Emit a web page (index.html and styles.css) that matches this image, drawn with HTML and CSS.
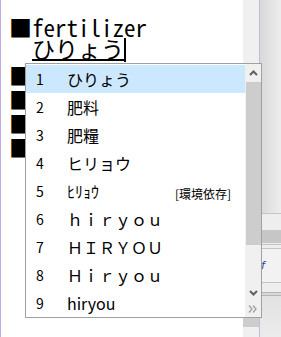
FILE: index.html
```html
<!DOCTYPE html>
<html lang="ja">
<head>
  <meta charset="UTF-8" />
  <title>IME 変換候補</title>
  <link rel="stylesheet" href="styles.css">
</head>
<body>

  <div class="screen">
    <!-- Editor -->
    <div class="editor">
      <div class="line"><span class="bullet">■</span>fertilizer</div>
      <div class="line"><span class="bullet">　</span><span class="compose">ひりょう</span><span class="caret"></span></div>
      <div class="line"><span class="bullet">■</span></div>
      <div class="line"><span class="bullet">■</span></div>
      <div class="line"><span class="bullet">■</span></div>
      <div class="line"><span class="bullet">■</span></div>
    </div>

    <div class="editor-scroll">
      <div class="editor-thumb"></div>
    </div>

    <!-- Window behind -->
    <div class="back-window">
      <div class="band band-top"></div>
      <div class="band band-line"></div>
      <div class="band band-light" style="height: 16px"></div>
      <div class="band band-dark"></div>
      <div class="band band-light" style="height: 1px"></div>
      <div class="band band-line"></div>
      <div class="band band-light" style="height: 3px"></div>
      <div class="band band-line"></div>
      <div class="band band-field"><span class="field-text">f</span></div>
      <div class="band band-line"></div>
      <div class="band band-light" style="height: 9px"></div>
      <div class="band band-shadow"></div>
      <div class="band band-bottom"></div>
    </div>

    <!-- Candidate window -->
    <div class="candidates">
      <div class="cand-list">
        <div class="cand selected"><span class="num">1</span><span class="word">ひりょう</span></div>
        <div class="cand"><span class="num">2</span><span class="word">肥料</span></div>
        <div class="cand"><span class="num">3</span><span class="word">肥糧</span></div>
        <div class="cand"><span class="num">4</span><span class="word">ヒリョウ</span></div>
        <div class="cand"><span class="num">5</span><span class="word">ﾋﾘｮｳ</span><span class="note">[環境依存]</span></div>
        <div class="cand"><span class="num">6</span><span class="word">ｈｉｒｙｏｕ</span></div>
        <div class="cand"><span class="num">7</span><span class="word">ＨＩＲＹＯＵ</span></div>
        <div class="cand"><span class="num">8</span><span class="word">Ｈｉｒｙｏｕ</span></div>
        <div class="cand"><span class="num">9</span><span class="word">hiryou</span></div>
      </div>
      <div class="cand-scroll">
        <div class="scroll-btn btn-up">
          <svg width="9" height="6" viewBox="0 0 9 6"><polyline points="1,5 4.5,1.5 8,5" fill="none" stroke="#606060" stroke-width="2"/></svg>
        </div>
        <div class="scroll-thumb"></div>
        <div class="scroll-track"></div>
        <div class="scroll-btn btn-down">
          <svg width="9" height="6" viewBox="0 0 9 6"><polyline points="1,1 4.5,4.5 8,1" fill="none" stroke="#606060" stroke-width="2"/></svg>
        </div>
        <div class="scroll-btn btn-more">
          <svg width="10" height="8" viewBox="0 0 10 8"><polyline points="1,0.5 4,4 1,7.5" fill="none" stroke="#a0a0a0" stroke-width="1.3"/><polyline points="5,0.5 8,4 5,7.5" fill="none" stroke="#a0a0a0" stroke-width="1.3"/></svg>
        </div>
      </div>
    </div>
  </div>

</body>
</html>
```

FILE: styles.css
```css
:root {
  --ink: #000000;
  --select: #cce8ff;
  --frame: #a0a0a0;
  --bar: #f0f0f0;
  --thumb: #cdcdcd;
  --lilac: #c2a8e4;
}

* {
  margin: 0;
  padding: 0;
  box-sizing: border-box;
}

html,
body {
  width: 100%;
  height: 100%;
  overflow: hidden;
  background: #ffffff;
}

.screen {
  position: relative;
  display: flex;
  width: 281px;
  height: 337px;
}

/* Editor */
.editor {
  width: 243px;
  border-left: 1px solid var(--lilac);
  padding: 15px 0 0 8px;
  font-family: "Noto Sans Mono CJK JP", "Noto Sans CJK JP", monospace;
  font-size: 23px;
  line-height: 24px;
  color: var(--ink);
  overflow: hidden;
}

.line {
  height: 24px;
  white-space: nowrap;
}

.compose {
  display: inline-block;
  height: 22px;
  line-height: 19px;
  vertical-align: top;
  border-bottom: 2px solid var(--ink);
}

.caret {
  display: inline-block;
  width: 2px;
  height: 24px;
  margin-top: -1px;
  background: var(--ink);
  vertical-align: top;
}

.editor-scroll {
  width: 17px;
  background: var(--bar);
  border-right: 1px solid #c8b8e2;
  display: flex;
  flex-direction: column;
  justify-content: flex-end;
  padding-bottom: 10px;
}

.editor-thumb {
  height: 80px;
  background: var(--thumb);
}

/* Window behind */
.back-window {
  flex: 1;
  display: flex;
  flex-direction: column;
}

.band-top {
  height: 213px;
  background: linear-gradient(to right, #d9d9d9, #ededed);
}

.band-line {
  height: 1px;
  background: #c4c4c4;
}

.band-light {
  background: #eeeeee;
}

.band-dark {
  height: 13px;
  background: #c6c6c6;
}

.band-field {
  height: 33px;
  background: #f2f2f2;
  padding: 11px 0 0 1px;
  font-family: "DejaVu Sans", sans-serif;
  font-size: 11px;
  font-style: italic;
  line-height: 11px;
  color: #1d4f86;
}

.band-shadow {
  height: 4px;
  border-top: 1px solid #b4b4b4;
  border-bottom: 1px solid #b4b4b4;
  background: #d8d8d8;
}

.band-bottom {
  flex: 1;
  background: linear-gradient(to bottom, #e2e2e2, #ececec);
}

/* Candidate window */
.candidates {
  position: absolute;
  left: 25px;
  top: 63px;
  width: 237px;
  height: 255px;
  display: flex;
  background: #ffffff;
  border: 1px solid var(--frame);
}

.cand-list {
  flex: 1;
  padding-top: 1px;
}

.cand {
  display: flex;
  align-items: center;
  height: 28px;
  font-family: "Noto Sans CJK JP", sans-serif;
  font-size: 16px;
  color: var(--ink);
  white-space: nowrap;
}

.cand.selected {
  background: var(--select);
}

.num {
  width: 41px;
  padding-left: 10px;
  font-size: 14px;
}

.note {
  margin-left: auto;
  padding: 4px 14px 0 0;
  font-size: 12px;
}

.cand-scroll {
  width: 16px;
  display: flex;
  flex-direction: column;
  background: var(--bar);
}

.scroll-btn {
  display: flex;
  align-items: center;
  justify-content: center;
}

.btn-up {
  height: 18px;
}

.scroll-thumb {
  height: 163px;
  margin-left: 1px;
  background: var(--thumb);
}

.scroll-track {
  height: 40px;
}

.btn-down,
.btn-more {
  height: 16px;
}
```
